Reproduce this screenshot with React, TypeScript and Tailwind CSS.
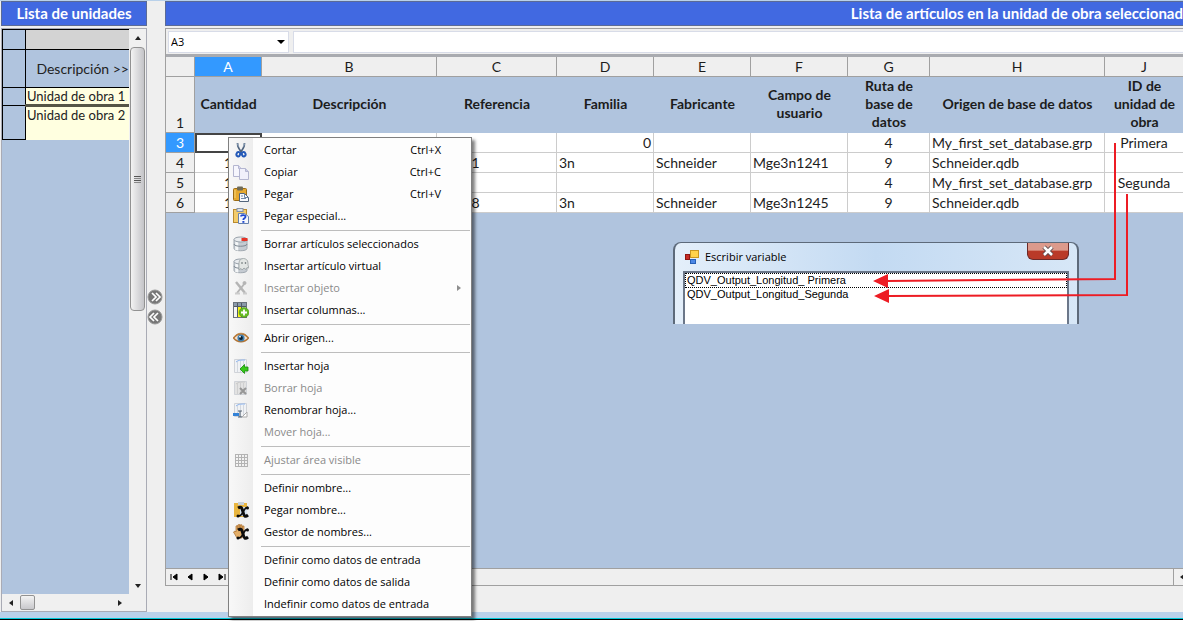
import clsx from 'clsx';
import type { ReactNode } from 'react';

type MenuEntry = { label: string; shortcut?: string; disabled?: boolean; submenu?: boolean; icon?: ReactNode };

const svgProps = { width: 16, height: 16, viewBox: '0 0 16 16', 'aria-hidden': true } as const;

function CutIcon() {
  return (
    <svg {...svgProps} fill="none">
      <path d="M4.500 1c0 4 1.500 6.500 4.500 9.500M11.500 1c0 4-1.500 6.500-4.500 9.500" stroke="#4d627d" strokeWidth="1.700" />
      <path d="M4.500 1.500l1 3M11.500 1.500l-1 3" stroke="#9db0c6" />
      <ellipse cx="5.300" cy="12.200" rx="1.800" ry="2.200" stroke="#2359b8" strokeWidth="2" transform="rotate(20 5.300 12.200)" />
      <ellipse cx="10.700" cy="12.200" rx="1.800" ry="2.200" stroke="#2359b8" strokeWidth="2" transform="rotate(-20 10.700 12.200)" />
    </svg>
  );
}

function CopyIcon() {
  return (
    <svg {...svgProps} stroke="#b4b6d0">
      <path d="M.5 1.500h5l3 3v8h-8z" fill="#f6f6fd" />
      <path d="M5.500 1.500v3h3" fill="#d5d6ee" />
      <path d="M6.500 4.500h6l3 3v8h-9z" fill="#f0f0fb" />
      <path d="M12.500 4.500v3h3" fill="#c9cbe8" />
    </svg>
  );
}

function PasteIcon() {
  return (
    <svg {...svgProps}>
      <rect x=".5" y="2.500" width="13" height="12" rx="1" fill="#e6a92e" stroke="#9a6b15" />
      <path d="M2 4v8" stroke="#f8d678" />
      <rect x="4" y=".5" width="6" height="4" rx="1" fill="#6f6a55" />
      <path d="M6.500 7.500h5l4 4v4h-9z" fill="#f7f9fc" stroke="#53657c" />
      <path d="M11.500 7.500v4h4M8 10h2M8 12.500h5" stroke="#7389a5" fill="none" />
    </svg>
  );
}

function PasteSpecialIcon() {
  return (
    <svg {...svgProps}>
      <rect x=".5" y="1.500" width="13" height="13" fill="#f3cc6b" stroke="#b98b2f" />
      <rect x="4" y=".5" width="6" height="3" fill="#dbe2eb" stroke="#8592a5" />
      <path d="M5.500 5.500h6l4 3v7h-10z" fill="#f5f7fd" stroke="#6681ae" />
      <path d="M8 8.500c0-2 4.500-2 4.500.3 0 1.700-2.200 1.400-2.200 3.200" stroke="#2149d0" strokeWidth="1.800" fill="none" />
      <rect x="9.400" y="13" width="2" height="1.800" fill="#2149d0" />
    </svg>
  );
}

function Cylinder() {
  return (
    <>
      <path d="M1 3.500v9c0 3 13 3 13 0v-9" fill="#c5cbd2" stroke="#a0a8b0" />
      <path d="M3 5v9M4.500 5.500v9" stroke="#f5f7f8" strokeWidth="1.500" />
      <path d="M1 8c0 3 13 3 13 0" fill="none" stroke="#7d8791" />
      <ellipse cx="7.500" cy="3.500" rx="6.500" ry="2.500" fill="#e8ebee" stroke="#98a1aa" />
    </>
  );
}

function DeleteItemIcon() {
  return (
    <svg {...svgProps}>
      <Cylinder />
      <rect x="8.500" y="2" width="6" height="3" fill="#e63327" />
    </svg>
  );
}

function GhostIcon() {
  return (
    <svg {...svgProps}>
      <Cylinder />
      <path d="M6 12V5c0-6 9-6 9 0v2l1 3-2-.5-1 2-2-1.500-2 2-1-1.500z" fill="#e3e6e4" stroke="#9aa1a2" strokeWidth=".8" />
      <circle cx="9" cy="5" r=".8" fill="#555d60" />
      <circle cx="12.500" cy="5" r=".8" fill="#555d60" />
    </svg>
  );
}

function ToolsIcon() {
  return (
    <svg {...svgProps} stroke="#b5b5b5" fill="none">
      <path d="M3 2l9 11" strokeWidth="2.500" />
      <path d="M12 3L4 13" strokeWidth="2" />
      <path d="M2 13.500h5M10 13.500h4" stroke="#cccccc" strokeWidth="2" />
      <circle cx="11.500" cy="3" r="1.500" fill="#b5b5b5" />
    </svg>
  );
}

function ColumnsIcon() {
  return (
    <svg {...svgProps}>
      <rect x=".5" y=".5" width="13" height="15" fill="#f4f4f4" stroke="#6b737c" />
      <rect x="1" y="1" width="12" height="3" fill="#8b9aaa" />
      <rect x="5" y="4" width="3" height="11" fill="#fbf318" />
      <path d="M4.500 1v14M8.500 1v14M1 4.500h12" stroke="#515b65" />
      <circle cx="11" cy="10.500" r="5" fill="#63ba23" stroke="#459313" strokeWidth=".5" />
      <path d="M11 7.500v6M8 10.500h6" stroke="#fff" strokeWidth="1.800" />
    </svg>
  );
}

function EyeIcon() {
  return (
    <svg {...svgProps}>
      <path d="M.5 8c4-5.500 11-5.500 15 0-4 5-11 5-15 0z" fill="#f6e4d3" stroke="#b37332" strokeWidth="1.500" />
      <path d="M1 7C5 2 11 2 15 7" fill="none" stroke="#c18a4c" />
      <circle cx="8" cy="8" r="3.600" fill="#3e7eaf" />
      <circle cx="8" cy="8" r="1.900" fill="#0c2031" />
      <circle cx="7" cy="6.700" r=".9" fill="#fff" />
    </svg>
  );
}

function SheetIcon({ kind }: { kind: 'insert' | 'delete' | 'rename' }) {
  const disabled = kind === 'delete';
  return (
    <svg {...svgProps}>
      <path d="M1.500 1.500h12v13h-12z" fill={disabled ? '#e2e2e2' : '#f0f2f5'} stroke="#d0d3d8" />
      <path d="M4.500 3v11M7.500 3v11M10.500 3v11" stroke={disabled ? '#cfcfcf' : '#d3d8df'} />
      <path d="M3 4c2-2 5-2 9-2" fill="none" stroke={disabled ? '#c9c9c9' : '#8eb5ef'} />
      {kind === 'insert' && <path d="M7 11l4.500-4.500V9H15v4h-3.500v2.500z" fill="#38c818" stroke="#188d0e" strokeWidth=".8" />}
      {kind === 'delete' && <path d="M7 8l6 6M13 8l-6 6" stroke="#969696" strokeWidth="2" />}
      {kind === 'rename' && (
        <>
          <path d="M14 10v5h-5z" fill="#fff" stroke="#aaa" />
          <rect x="0" y="11" width="6" height="3" fill="#3483d8" />
          <path d="M5 9h2v6H5m4-6H7m0 6h2" fill="none" stroke="#526071" />
        </>
      )}
    </svg>
  );
}

function GridIcon() {
  return (
    <svg {...svgProps}>
      <path d="M2.500 2v13M5.500 2v13M8.500 2v13M11.500 2v13M14.500 2v13M2 2.500h13M2 5.500h13M2 8.500h13M2 11.500h13M2 14.500h13" stroke="#b3b3b3" />
    </svg>
  );
}

function VariableMark() {
  return (
    <>
      <path d="M5 6c3.500-2 4 0 5 4s2 5.500 5 3" fill="none" stroke="#0d0d0d" strokeWidth="3" />
      <path d="M15 5.500c-3-1-4 3.500-5.500 5.500s-2.500 4-5 2.500" fill="none" stroke="#0d0d0d" strokeWidth="1.600" />
      <circle cx="14.500" cy="6" r="1.500" fill="#0d0d0d" />
      <circle cx="5" cy="14" r="1.500" fill="#0d0d0d" />
    </>
  );
}

function PasteNameIcon() {
  return (
    <svg {...svgProps}>
      <rect x="1" y="1" width="13" height="14" fill="#e9b640" />
      <rect x="5" y="0" width="6" height="3" fill="#c9d1da" />
      <path d="M7 5h7v9H7z" fill="#d8e3ef" />
      <VariableMark />
    </svg>
  );
}

function NameManagerIcon() {
  return (
    <svg {...svgProps}>
      <path d="M4 14L.5 8 2 7l1 1V2l1.500-.5L5 6V.8L6.800.5 7 6V1l2-.2V6l.5-4h1.500v8l-2 4z" fill="#e5b06a" stroke="#a96d2c" strokeWidth=".7" />
      <VariableMark />
    </svg>
  );
}

const menuGroups: MenuEntry[][] = [
  [
    { label: 'Cortar', shortcut: 'Ctrl+X', icon: <CutIcon /> },
    { label: 'Copiar', shortcut: 'Ctrl+C', icon: <CopyIcon /> },
    { label: 'Pegar', shortcut: 'Ctrl+V', icon: <PasteIcon /> },
    { label: 'Pegar especial...', icon: <PasteSpecialIcon /> },
  ],
  [
    { label: 'Borrar artículos seleccionados', icon: <DeleteItemIcon /> },
    { label: 'Insertar artículo virtual', icon: <GhostIcon /> },
    { label: 'Insertar objeto', disabled: true, submenu: true, icon: <ToolsIcon /> },
    { label: 'Insertar columnas...', icon: <ColumnsIcon /> },
  ],
  [{ label: 'Abrir origen...', icon: <EyeIcon /> }],
  [
    { label: 'Insertar hoja', icon: <SheetIcon kind="insert" /> },
    { label: 'Borrar hoja', disabled: true, icon: <SheetIcon kind="delete" /> },
    { label: 'Renombrar hoja...', icon: <SheetIcon kind="rename" /> },
    { label: 'Mover hoja...', disabled: true },
  ],
  [{ label: 'Ajustar área visible', disabled: true, icon: <GridIcon /> }],
  [
    { label: 'Definir nombre...' },
    { label: 'Pegar nombre...', icon: <PasteNameIcon /> },
    { label: 'Gestor de nombres...', icon: <NameManagerIcon /> },
  ],
  [
    { label: 'Definir como datos de entrada' },
    { label: 'Definir como datos de salida' },
    { label: 'Indefinir como datos de entrada' },
  ],
];

const columns = [
  { letter: 'A', title: 'Cantidad', width: 'w-[67px]' },
  { letter: 'B', title: 'Descripción', width: 'w-[175px]' },
  { letter: 'C', title: 'Referencia', width: 'w-[120px]' },
  { letter: 'D', title: 'Familia', width: 'w-[97px]' },
  { letter: 'E', title: 'Fabricante', width: 'w-[97px]' },
  { letter: 'F', title: 'Campo de usuario', width: 'w-[97px]' },
  { letter: 'G', title: 'Ruta de base de datos', width: 'w-[82px]' },
  { letter: 'H', title: 'Origen de base de datos', width: 'w-[175px]' },
  { letter: 'J', title: 'ID de unidad de obra', width: 'w-[79px]' },
];

const rows = [
  { id: 3, cells: ['', '', '', '0', '', '', '4', 'My_first_set_database.grp', 'Primera'] },
  { id: 4, cells: ['1', '', '16401', '3n', 'Schneider', 'Mge3n1241', '9', 'Schneider.qdb', ''] },
  { id: 5, cells: ['1', '', '', '', '', '', '4', 'My_first_set_database.grp', 'Segunda'] },
  { id: 6, cells: ['1', '', '16408', '3n', 'Schneider', 'Mge3n1245', '9', 'Schneider.qdb', ''] },
];

const arrowPaths = {
  up: 'M1 6l3-4 3 4z',
  down: 'M1 2l3 4 3-4z',
  left: 'M6 1L2 4l4 3z',
  right: 'M2 1l4 3-4 3z',
};

function Arrow({ dir }: { dir: keyof typeof arrowPaths }) {
  return (
    <svg width="8" height="8" viewBox="0 0 8 8" aria-hidden>
      <path d={arrowPaths[dir]} fill="#222" />
    </svg>
  );
}

function UnitList() {
  return (
    <aside className="flex w-[147px] shrink-0 flex-col pl-px">
      <h2 className="h-[25px] border border-[#5b6b96] bg-[#4169e1] text-center font-[Lato] text-[15px] leading-[23px] font-bold text-white">
        Lista de unidades
      </h2>
      <div className="mt-[2px] flex min-h-0 flex-1 flex-col border border-[#a9abb5]">
        <div className="flex min-h-0 flex-1">
          <div className="min-w-0 flex-1 overflow-hidden bg-[#b0c4de]">
            <table className="w-full table-fixed border-collapse font-[Lato] text-[13px] whitespace-nowrap text-[#222]">
              <thead>
                <tr className="h-[20px]">
                  <td className="w-[23px] border border-black" />
                  <td className="border border-r-0 border-black bg-[#d3d3d3]" />
                </tr>
                <tr className="h-[38px]">
                  <td className="border border-black" />
                  <th className="border border-r-0 border-black p-0 text-right text-[14px] font-normal">Descripción &gt;&gt;</th>
                </tr>
              </thead>
              <tbody>
                <tr className="h-[18px]">
                  <td className="border border-black" />
                  <td className="border-b-3 border-l border-[#555546] bg-[#ffffe0] pl-px leading-[15px]">Unidad de obra 1</td>
                </tr>
                <tr className="h-[34px]">
                  <td className="border border-black" />
                  <td className="bg-[#ffffe0] pl-px align-top leading-[17px]">Unidad de obra 2</td>
                </tr>
              </tbody>
            </table>
          </div>
          <div className="flex w-[17px] flex-col items-center bg-[#f0f0f0]">
            <button aria-label="Subir" className="flex h-[18px] w-full items-center justify-center"><Arrow dir="up" /></button>
            <div className="flex h-[264px] w-[15px] flex-col items-center justify-center gap-px rounded-sm border border-[#929292] bg-linear-to-r from-[#f3f3f3] to-[#c4c4c8]">
              <span className="h-px w-[7px] bg-[#555]" />
              <span className="h-px w-[7px] bg-[#888]" />
              <span className="h-px w-[7px] bg-[#555]" />
              <span className="h-px w-[7px] bg-[#888]" />
            </div>
            <button aria-label="Bajar" className="mt-auto flex h-[17px] w-full items-center justify-center"><Arrow dir="down" /></button>
          </div>
        </div>
        <div className="flex h-[17px] items-center bg-[#f0f0f0] pr-[17px]">
          <button aria-label="Izquierda" className="flex w-[18px] justify-center"><Arrow dir="left" /></button>
          <div className="h-[15px] w-[15px] rounded-xs border border-[#929292] bg-linear-to-b from-[#f3f3f3] to-[#c8c8cc]" />
          <button aria-label="Derecha" className="ml-auto flex w-[18px] justify-center"><Arrow dir="right" /></button>
        </div>
      </div>
    </aside>
  );
}

function Splitter() {
  return (
    <div className="flex w-[18px] shrink-0 flex-col items-center gap-1 pt-[288px] pr-[2px]">
      {['M5 4l4 4-4 4M9 4l4 4-4 4', 'M11 4L7 8l4 4M7 4L3 8l4 4'].map((d, i) => (
        <button key={d} aria-label={i === 0 ? 'Expandir' : 'Contraer'}>
          <svg {...svgProps}>
            <circle cx="8" cy="8" r="7" fill="#777" stroke="#999" />
            <path d={d} fill="none" stroke="#fff" strokeWidth="1.700" />
          </svg>
        </button>
      ))}
    </div>
  );
}

function SheetTable() {
  return (
    <table className="w-[1018px] table-fixed border-separate border-spacing-0 font-[Lato] text-[14px] text-[#1c1c1c]">
      <thead>
        <tr className="h-[20px] bg-[#efefef]">
          <th className="w-[29px] border-r border-b border-[#a0a0a0]" />
          {columns.map((c) => (
            <th
              key={c.letter}
              className={clsx('border-r border-b border-[#a0a0a0] leading-[18px] font-normal', c.width, c.letter === 'A' && 'bg-[#3399ff] text-white')}
            >
              {c.letter}
            </th>
          ))}
        </tr>
      </thead>
      <tbody>
        <tr className="h-[56px] bg-[#b0c4de]">
          <th className="border-r border-b border-[#a0a0a0] bg-[#efefef] align-bottom leading-[18px] font-normal">1</th>
          {columns.map((c) => (
            <th key={c.letter} className="px-1 pt-0 pb-[2px] text-[14px] leading-[18px] font-bold">{c.title}</th>
          ))}
        </tr>
        {rows.map((row) => (
          <tr key={row.id} className="h-[20px] bg-white leading-[18px] whitespace-nowrap">
            <th className={clsx('border-r border-b border-[#a0a0a0] font-normal', row.id === 3 ? 'bg-[#3399ff] text-white' : 'bg-[#efefef]')}>
              {row.id}
            </th>
            {row.cells.map((cell, i) => (
              <td
                key={columns[i].letter}
                className={clsx(
                  'overflow-hidden px-[2px]',
                  row.id === 3 && i === 0 ? 'border-2 border-[#444]' : 'border-r border-b border-[#ccc]',
                  (i === 0 || i === 6 || i === 8) && 'text-center',
                  i === 3 && row.id === 3 && 'text-right',
                )}
              >
                {cell}
              </td>
            ))}
          </tr>
        ))}
      </tbody>
    </table>
  );
}

function Worksheet() {
  return (
    <main className="flex min-w-0 flex-1 flex-col">
      <h2 className="h-[25px] overflow-hidden border-y border-l border-[#5b6b96] bg-[#4169e1] text-right font-[Lato] text-[15px] leading-[23px] font-bold whitespace-nowrap text-white">
        Lista de artículos en la unidad de obra seleccionad
      </h2>
      <div className="mt-[2px] mb-[26px] flex min-h-0 flex-1 flex-col border-y border-l border-[#a0a0a0] bg-[#b0c4de]">
        <div className="flex h-[28px] shrink-0 gap-1 border-b-3 border-[#a9abb0] bg-[#efefef] pt-[2px] pb-px pl-[2px]">
          <div className="flex w-[121px] items-center justify-between border border-[#d8dce8] bg-white pr-[3px] pl-[2px]">
            <input aria-label="Celda" defaultValue="A3" className="w-[60px] font-['Open_Sans'] text-[11px] outline-none" />
            <button aria-label="Elegir celda">
              <svg width="8" height="4" viewBox="0 0 8 4" aria-hidden><path d="M0 0h8L4 4z" /></svg>
            </button>
          </div>
          <input aria-label="Fórmula" className="min-w-0 flex-1 border border-r-0 border-[#d8dce8] bg-white outline-none" />
        </div>
        <div className="min-h-0 flex-1 overflow-hidden">
          <SheetTable />
        </div>
        <div className="flex h-[17px] shrink-0 border-t border-[#a0a0a0] bg-[#efefef]">
          <nav aria-label="Hojas" className="flex flex-1 items-center gap-2 border-r border-[#a0a0a0] pl-1">
            {[
              ['Primera hoja', 'M1 1v6M7 1L3 4l4 3z'],
              ['Hoja anterior', 'M6 1L2 4l4 3z'],
              ['Hoja siguiente', 'M2 1l4 3-4 3z'],
              ['Última hoja', 'M7 1v6M1 1l4 3-4 3z'],
            ].map(([label, d]) => (
              <button key={label} aria-label={label}>
                <svg width="8" height="8" viewBox="0 0 8 8" stroke="#000" aria-hidden><path d={d} /></svg>
              </button>
            ))}
          </nav>
          <button aria-label="Desplazar" className="flex w-[9px] items-center overflow-hidden bg-[#f0f0f0] pl-[4px]"><span className="shrink-0"><Arrow dir="left" /></span></button>
        </div>
      </div>
    </main>
  );
}

function ContextMenu() {
  return (
    <div
      role="menu"
      className="absolute top-[137px] left-[228px] w-[244px] border border-[#808080] bg-linear-to-r from-[#f8f8f8] from-0% via-[#ededed] via-[24px] to-[#fdfdfd] to-[24px] py-px font-['Open_Sans'] text-[11px] text-black shadow-[3px_3px_3px_rgba(0,0,0,0.5)]"
    >
      {menuGroups.map((group, i) => (
        <div key={i}>
          {i > 0 && <div role="separator" className="mr-px ml-[32px] flex h-[6px] items-center"><span className="h-px w-full bg-[#bdbdbd]" /></div>}
          {group.map((item) => (
            <button
              key={item.label}
              role="menuitem"
              disabled={item.disabled}
              className={clsx('flex h-[22px] w-full items-center pl-1 text-left', item.disabled && 'text-[#8a8a8a]')}
            >
              <span className="mr-[15px] flex h-4 w-4 shrink-0">{item.icon}</span>
              <span className="flex-1 whitespace-nowrap">{item.label}</span>
              {item.shortcut && <span className="mr-[30px]">{item.shortcut}</span>}
              {item.submenu && <span className="mr-[8px] opacity-50"><Arrow dir="right" /></span>}
            </button>
          ))}
        </div>
      ))}
    </div>
  );
}

function VariableDialog() {
  return (
    <section
      role="dialog"
      aria-label="Escribir variable"
      className="absolute top-[242px] left-[673px] flex h-[82px] w-[406px] flex-col overflow-hidden rounded-t-lg border-x-2 border-t border-[#5d6a7a] bg-linear-to-r from-[#e4effa] via-[#c3daf2] to-[#d7e7f7] px-2"
    >
      <header className="flex h-[28px] shrink-0 items-center gap-[6px] pl-[2px]">
        <svg width="14" height="14" viewBox="0 0 14 14" aria-hidden>
          <rect x="5.500" y=".5" width="8" height="7" fill="#ffd34c" stroke="#c89722" />
          <rect x=".5" y="4.500" width="4" height="5" fill="#c62b25" stroke="#8e1612" />
          <rect x="5.500" y="9.500" width="5" height="4" fill="#4c87e5" stroke="#2760b6" />
        </svg>
        <h3 className="font-['Open_Sans'] text-[11px] text-black">Escribir variable</h3>
        <button aria-label="Cerrar" className="ml-auto flex h-[17px] w-[42px] items-center justify-center self-start rounded-b-md border border-t-0 border-[#6b2a28] bg-linear-to-b from-[#dc9a8c] from-45% to-[#b93a28] to-50%">
          <svg width="14" height="12" viewBox="0 0 14 12" aria-hidden>
            <path d="M3 2l8 8M11 2l-8 8" stroke="#5d4a4c" strokeWidth="4.500" />
            <path d="M3 2l8 8M11 2l-8 8" stroke="#fff" strokeWidth="2.500" />
          </svg>
        </button>
      </header>
      <ul className="flex-1 border-x-2 border-t-2 border-[#6b7789] bg-white font-['Liberation_Sans'] text-[11px] leading-[13px] whitespace-pre text-black">
        <li className="border border-dotted border-black pl-px">QDV_Output_Longitud_ Primera</li>
        <li className="pl-[2px]">QDV_Output_Longitud_Segunda</li>
      </ul>
    </section>
  );
}

export default function App() {
  return (
    <div className="relative flex h-screen flex-col overflow-hidden bg-[#efefef]">
      <div className="h-px shrink-0 bg-[#b9d1ea]" />
      <div className="flex min-h-0 flex-1">
        <UnitList />
        <Splitter />
        <Worksheet />
      </div>
      <div className="h-[9px] shrink-0 border-b border-white bg-[#b9d1ea]">
        <div className="mt-[6px] h-[2px] border-t border-b border-t-[#00c8d8] border-b-black" />
      </div>
      <VariableDialog />
      <ContextMenu />
      <svg className="pointer-events-none absolute top-0 left-0" width="1183" height="330" aria-hidden>
        <path d="M1115 143V279L886 281M1127 194V295L886 296" fill="none" stroke="#ed1c24" strokeWidth="2" />
        <path d="M873 281l15-7v14zM874 296l15-7v14z" fill="#ed1c24" />
      </svg>
    </div>
  );
}
